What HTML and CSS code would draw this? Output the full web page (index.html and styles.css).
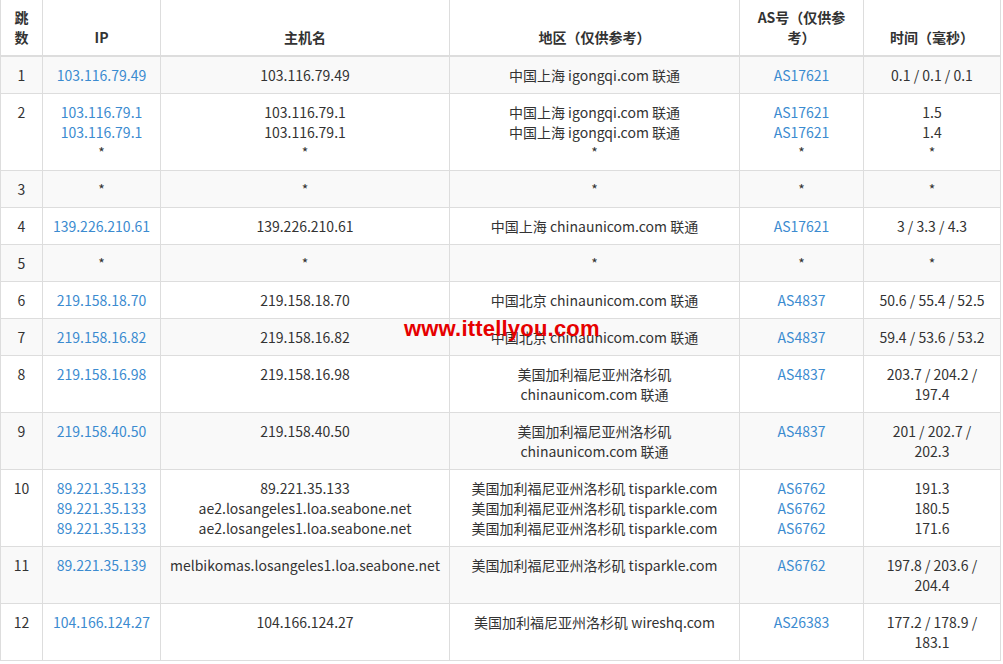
FILE: index.html
```html
<!DOCTYPE html>
<html lang="zh-CN">
<head>
<meta charset="utf-8">
<title>路由追踪</title>
<link rel="stylesheet" href="styles.css">
</head>
<body>
<div class="wrap">
<table class="trace">
  <colgroup>
    <col class="c-hop">
    <col class="c-ip">
    <col class="c-host">
    <col class="c-geo">
    <col class="c-as">
    <col class="c-time">
  </colgroup>
  <thead>
    <tr>
      <th>跳数</th>
      <th>IP</th>
      <th>主机名</th>
      <th>地区（仅供参考）</th>
      <th>AS号（仅供参考）</th>
      <th>时间（毫秒）</th>
    </tr>
  </thead>
  <tbody>
    <tr>
      <td>1</td>
      <td><a href="#">103.116.79.49</a></td>
      <td>103.116.79.49</td>
      <td>中国上海 igongqi.com 联通</td>
      <td><a href="#">AS17621</a></td>
      <td>0.1 / 0.1 / 0.1</td>
    </tr>
    <tr>
      <td>2</td>
      <td><a href="#">103.116.79.1</a><br><a href="#">103.116.79.1</a><br>*</td>
      <td>103.116.79.1<br>103.116.79.1<br>*</td>
      <td>中国上海 igongqi.com 联通<br>中国上海 igongqi.com 联通<br>*</td>
      <td><a href="#">AS17621</a><br><a href="#">AS17621</a><br>*</td>
      <td>1.5<br>1.4<br>*</td>
    </tr>
    <tr>
      <td>3</td>
      <td>*</td>
      <td>*</td>
      <td>*</td>
      <td>*</td>
      <td>*</td>
    </tr>
    <tr>
      <td>4</td>
      <td><a href="#">139.226.210.61</a></td>
      <td>139.226.210.61</td>
      <td>中国上海 chinaunicom.com 联通</td>
      <td><a href="#">AS17621</a></td>
      <td>3 / 3.3 / 4.3</td>
    </tr>
    <tr>
      <td>5</td>
      <td>*</td>
      <td>*</td>
      <td>*</td>
      <td>*</td>
      <td>*</td>
    </tr>
    <tr>
      <td>6</td>
      <td><a href="#">219.158.18.70</a></td>
      <td>219.158.18.70</td>
      <td>中国北京 chinaunicom.com 联通</td>
      <td><a href="#">AS4837</a></td>
      <td>50.6 / 55.4 / 52.5</td>
    </tr>
    <tr>
      <td>7</td>
      <td><a href="#">219.158.16.82</a></td>
      <td>219.158.16.82</td>
      <td>中国北京 chinaunicom.com 联通</td>
      <td><a href="#">AS4837</a></td>
      <td>59.4 / 53.6 / 53.2</td>
    </tr>
    <tr>
      <td>8</td>
      <td><a href="#">219.158.16.98</a></td>
      <td>219.158.16.98</td>
      <td>美国加利福尼亚州洛杉矶<br>chinaunicom.com 联通</td>
      <td><a href="#">AS4837</a></td>
      <td>203.7 / 204.2 /<br>197.4</td>
    </tr>
    <tr>
      <td>9</td>
      <td><a href="#">219.158.40.50</a></td>
      <td>219.158.40.50</td>
      <td>美国加利福尼亚州洛杉矶<br>chinaunicom.com 联通</td>
      <td><a href="#">AS4837</a></td>
      <td>201 / 202.7 /<br>202.3</td>
    </tr>
    <tr>
      <td>10</td>
      <td><a href="#">89.221.35.133</a><br><a href="#">89.221.35.133</a><br><a href="#">89.221.35.133</a></td>
      <td>89.221.35.133<br>ae2.losangeles1.loa.seabone.net<br>ae2.losangeles1.loa.seabone.net</td>
      <td>美国加利福尼亚州洛杉矶 tisparkle.com<br>美国加利福尼亚州洛杉矶 tisparkle.com<br>美国加利福尼亚州洛杉矶 tisparkle.com</td>
      <td><a href="#">AS6762</a><br><a href="#">AS6762</a><br><a href="#">AS6762</a></td>
      <td>191.3<br>180.5<br>171.6</td>
    </tr>
    <tr>
      <td>11</td>
      <td><a href="#">89.221.35.139</a></td>
      <td>melbikomas.losangeles1.loa.seabone.net</td>
      <td>美国加利福尼亚州洛杉矶 tisparkle.com</td>
      <td><a href="#">AS6762</a></td>
      <td>197.8 / 203.6 /<br>204.4</td>
    </tr>
    <tr>
      <td>12</td>
      <td><a href="#">104.166.124.27</a></td>
      <td>104.166.124.27</td>
      <td>美国加利福尼亚州洛杉矶 wireshq.com</td>
      <td><a href="#">AS26383</a></td>
      <td>177.2 / 178.9 /<br>183.1</td>
    </tr>
  </tbody>
</table>
<div class="watermark">www.ittellyou.com</div>
</div>
</body>
</html>
```

FILE: styles.css
```css
html, body {
  margin: 0;
  padding: 0;
  background: #fff;
}

body {
  font-family: "Noto Sans CJK SC", "Noto Sans", sans-serif;
  font-size: 14px;
  line-height: 20px;
  color: #333;
}

.wrap {
  position: relative;
  width: 1003px;
}

.trace {
  border-collapse: collapse;
  table-layout: fixed;
  width: 1000px;
}

.c-hop { width: 42px; }
.c-ip { width: 118px; }
.c-host { width: 289px; }
.c-geo { width: 290px; }
.c-as { width: 124px; }
.c-time { width: 137px; }

.trace th,
.trace td {
  padding: 8px;
  border: 1px solid #ddd;
  text-align: center;
  vertical-align: top;
}

.trace thead th {
  vertical-align: bottom;
  border-top: 0;
  border-bottom: 2px solid #ddd;
  padding-top: 7px;
  font-weight: bold;
}

.trace tbody tr:nth-child(odd) {
  background: #f9f9f9;
}

.trace a {
  color: #3b8bd0;
  text-decoration: none;
}

.watermark {
  position: absolute;
  left: 404px;
  top: 318px;
  font-family: "Liberation Sans", Arial, sans-serif;
  font-weight: bold;
  font-size: 22px;
  line-height: 22px;
  color: #e60000;
  letter-spacing: 0.2px;
  white-space: nowrap;
}
```
